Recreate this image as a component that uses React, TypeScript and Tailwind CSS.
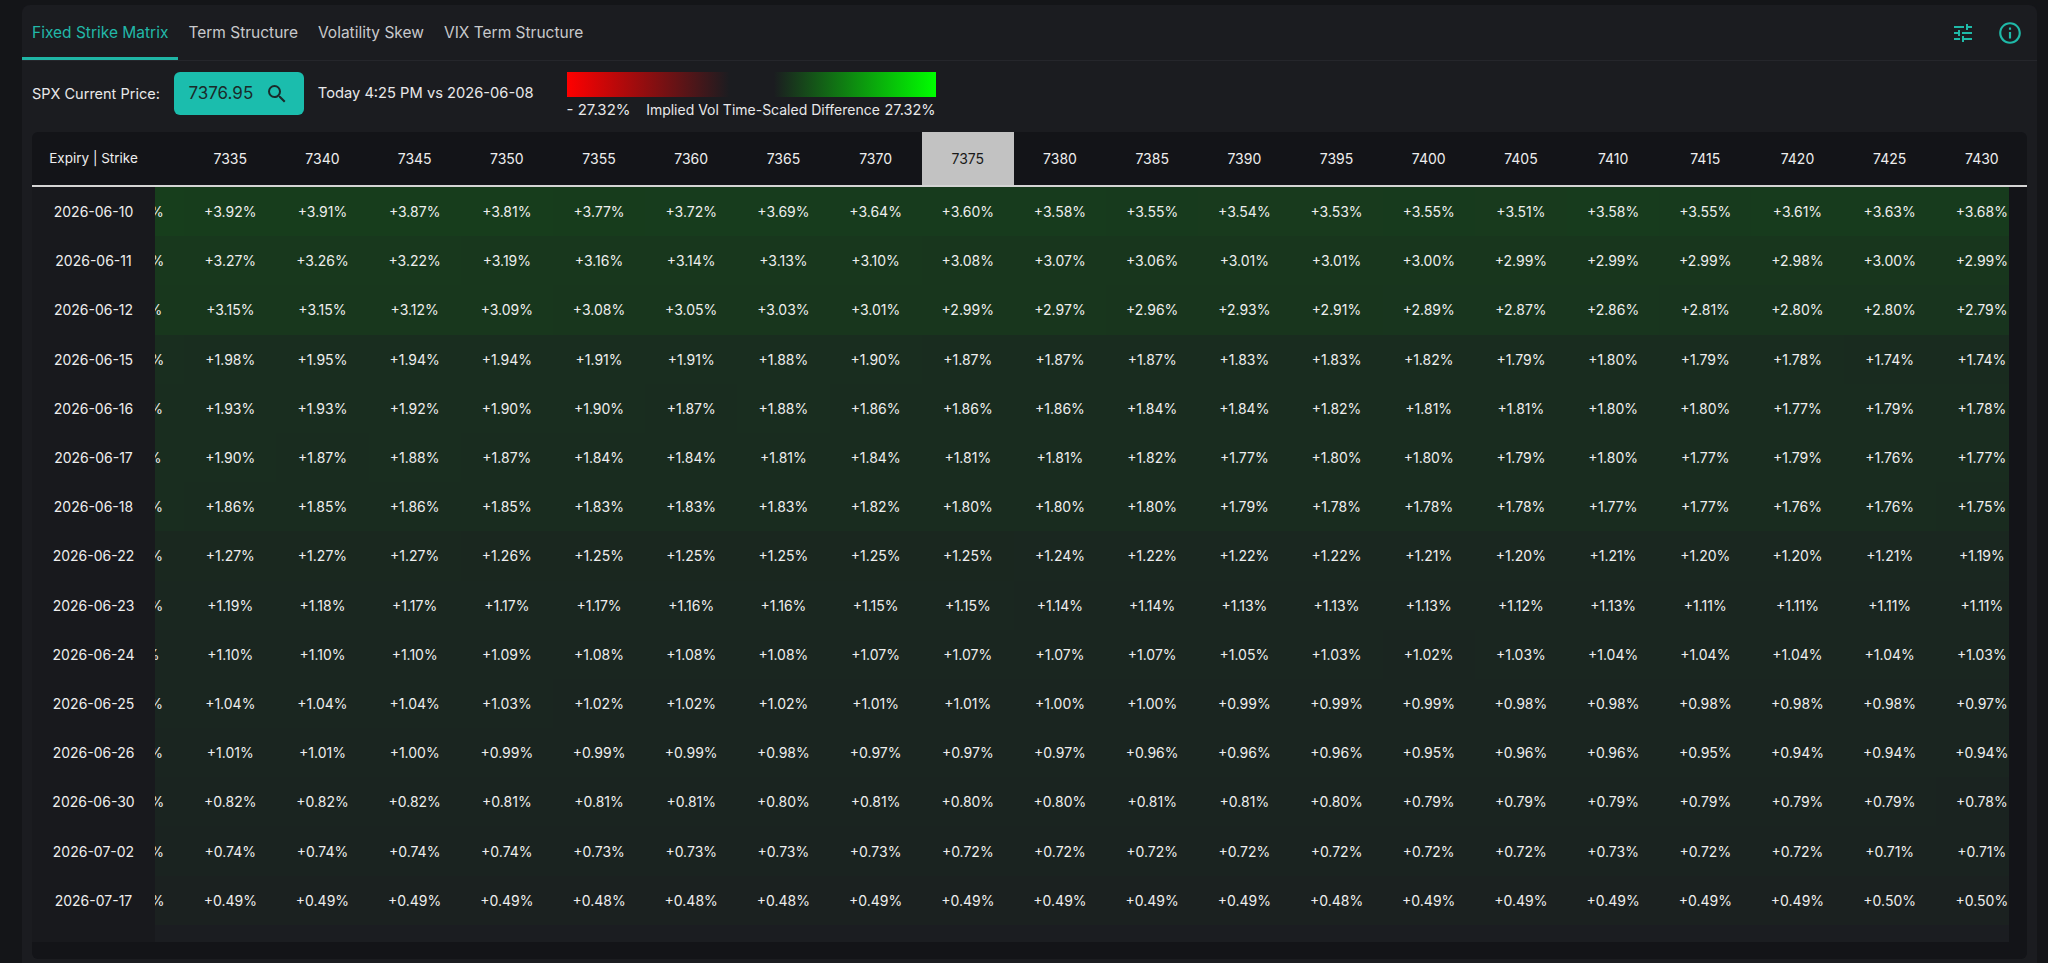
import { useLayoutEffect, useRef } from 'react'
import { MdTune, MdInfoOutline, MdSearch } from 'react-icons/md'

const strikes = [7330, 7335, 7340, 7345, 7350, 7355, 7360, 7365, 7370, 7375, 7380, 7385, 7390, 7395, 7400, 7405, 7410, 7415, 7420, 7425, 7430]

const rows: [string, number[]][] = [
  ['2026-06-10', [3.97, 3.92, 3.91, 3.87, 3.81, 3.77, 3.72, 3.69, 3.64, 3.6, 3.58, 3.55, 3.54, 3.53, 3.55, 3.51, 3.58, 3.55, 3.61, 3.63, 3.68]],
  ['2026-06-11', [3.3, 3.27, 3.26, 3.22, 3.19, 3.16, 3.14, 3.13, 3.1, 3.08, 3.07, 3.06, 3.01, 3.01, 3.0, 2.99, 2.99, 2.99, 2.98, 3.0, 2.99]],
  ['2026-06-12', [3.18, 3.15, 3.15, 3.12, 3.09, 3.08, 3.05, 3.03, 3.01, 2.99, 2.97, 2.96, 2.93, 2.91, 2.89, 2.87, 2.86, 2.81, 2.8, 2.8, 2.79]],
  ['2026-06-15', [2.0, 1.98, 1.95, 1.94, 1.94, 1.91, 1.91, 1.88, 1.9, 1.87, 1.87, 1.87, 1.83, 1.83, 1.82, 1.79, 1.8, 1.79, 1.78, 1.74, 1.74]],
  ['2026-06-16', [1.95, 1.93, 1.93, 1.92, 1.9, 1.9, 1.87, 1.88, 1.86, 1.86, 1.86, 1.84, 1.84, 1.82, 1.81, 1.81, 1.8, 1.8, 1.77, 1.79, 1.78]],
  ['2026-06-17', [1.91, 1.9, 1.87, 1.88, 1.87, 1.84, 1.84, 1.81, 1.84, 1.81, 1.81, 1.82, 1.77, 1.8, 1.8, 1.79, 1.8, 1.77, 1.79, 1.76, 1.77]],
  ['2026-06-18', [1.88, 1.86, 1.85, 1.86, 1.85, 1.83, 1.83, 1.83, 1.82, 1.8, 1.8, 1.8, 1.79, 1.78, 1.78, 1.78, 1.77, 1.77, 1.76, 1.76, 1.75]],
  ['2026-06-22', [1.28, 1.27, 1.27, 1.27, 1.26, 1.25, 1.25, 1.25, 1.25, 1.25, 1.24, 1.22, 1.22, 1.22, 1.21, 1.2, 1.21, 1.2, 1.2, 1.21, 1.19]],
  ['2026-06-23', [1.2, 1.19, 1.18, 1.17, 1.17, 1.17, 1.16, 1.16, 1.15, 1.15, 1.14, 1.14, 1.13, 1.13, 1.13, 1.12, 1.13, 1.11, 1.11, 1.11, 1.11]],
  ['2026-06-24', [1.11, 1.1, 1.1, 1.1, 1.09, 1.08, 1.08, 1.08, 1.07, 1.07, 1.07, 1.07, 1.05, 1.03, 1.02, 1.03, 1.04, 1.04, 1.04, 1.04, 1.03]],
  ['2026-06-25', [1.05, 1.04, 1.04, 1.04, 1.03, 1.02, 1.02, 1.02, 1.01, 1.01, 1.0, 1.0, 0.99, 0.99, 0.99, 0.98, 0.98, 0.98, 0.98, 0.98, 0.97]],
  ['2026-06-26', [1.02, 1.01, 1.01, 1.0, 0.99, 0.99, 0.99, 0.98, 0.97, 0.97, 0.97, 0.96, 0.96, 0.96, 0.95, 0.96, 0.96, 0.95, 0.94, 0.94, 0.94]],
  ['2026-06-30', [0.83, 0.82, 0.82, 0.82, 0.81, 0.81, 0.81, 0.8, 0.81, 0.8, 0.8, 0.81, 0.81, 0.8, 0.79, 0.79, 0.79, 0.79, 0.79, 0.79, 0.78]],
  ['2026-07-02', [0.75, 0.74, 0.74, 0.74, 0.74, 0.73, 0.73, 0.73, 0.73, 0.72, 0.72, 0.72, 0.72, 0.72, 0.72, 0.72, 0.73, 0.72, 0.72, 0.71, 0.71]],
  ['2026-07-17', [0.5, 0.49, 0.49, 0.49, 0.49, 0.48, 0.48, 0.48, 0.49, 0.49, 0.49, 0.49, 0.49, 0.48, 0.49, 0.49, 0.49, 0.49, 0.49, 0.5, 0.5]],
]

const MAX = 27.32
const BASE = [27, 29, 33]

// blend the cell background toward pure green / red by the size of the move
function cellColor(v: number) {
  const t = Math.min(Math.abs(v) / MAX, 1)
  const target = v >= 0 ? [0, 255, 0] : [255, 0, 0]
  const c = BASE.map((b, i) => Math.round(b + (target[i] - b) * t))
  return `rgb(${c[0]}, ${c[1]}, ${c[2]})`
}

const fmt = (v: number) => (v >= 0 ? '+' : '') + v.toFixed(2) + '%'

const tabs = ['Fixed Strike Matrix', 'Term Structure', 'Volatility Skew', 'VIX Term Structure']

export default function App() {
  const headRef = useRef<HTMLDivElement>(null)
  const bodyRef = useRef<HTMLDivElement>(null)

  useLayoutEffect(() => {
    if (headRef.current) headRef.current.scrollLeft = 63
    if (bodyRef.current) bodyRef.current.scrollLeft = 63
  }, [])

  return (
    <div className="min-h-screen bg-[#141518] pl-[22px] pr-[11px] pt-[5px] font-['Inter',sans-serif] text-[#e6e7e9]">
      <div className="rounded-lg bg-[#1b1c20] pb-6">
        {/* tabs */}
        <div className="flex h-[56px] items-stretch justify-between border-b border-[#25262b] pr-[14px]">
          <div className="flex">
            {tabs.map((t, i) => (
              <div
                key={t}
                className={
                  i === 0
                    ? 'flex items-center border-b-[3px] border-[#1fb5a5] px-[10px] pt-[3px] text-[15.5px] text-[#22b8a8]'
                    : 'flex items-center border-b-[3px] border-transparent px-[10px] pt-[3px] text-[15.5px] text-[#c8c9cc]'
                }
              >
                {t}
              </div>
            ))}
          </div>
          <div className="flex items-center gap-[22px] text-[#1fb9a8]">
            <MdTune size={24} />
            <MdInfoOutline size={26} />
          </div>
        </div>

        {/* price row */}
        <div className="flex items-start px-[10px] pt-[11px]">
          <div className="flex h-[43px] items-center">
            <span className="text-[14.5px] text-[#e8e8ea]">SPX Current Price:</span>
            <button className="ml-[14px] flex h-[43px] w-[130px] items-center justify-center gap-[12px] rounded-md bg-[#1bbdad] text-[17px] text-[#1a2a2a]">
              7376.95
              <MdSearch size={24} />
            </button>
            <span className="ml-[14px] text-[14.7px] text-[#e8e8ea]">Today 4:25 PM vs 2026-06-08</span>
          </div>
          <div className="ml-[33px] flex w-[369px] flex-col">
            <div className="h-[25px] w-full bg-[linear-gradient(to_right,#ff0000_0%,#1b1c20_44%,#1b1c20_56%,#00ff00_100%)]" />
            <div className="mt-[2px] flex items-center justify-between whitespace-nowrap text-[15px] leading-[22px] text-[#e8e8ea]">
              <span>- 27.32%</span>
              <span className="ml-[11px] text-[14px]">Implied Vol Time-Scaled Difference</span>
              <span className="text-[14.5px]">27.32%</span>
            </div>
          </div>
        </div>

        {/* matrix */}
        <div className="mx-[10px] mt-[11px] overflow-hidden rounded-md bg-[#131418] text-[14px] text-[#eeeeee]">
          <div className="flex h-[55px] border-b-2 border-[#d4d4d4]">
            <div className="flex w-[123px] shrink-0 items-center justify-center text-[13.5px]">Expiry | Strike</div>
            <div ref={headRef} className="flex flex-1 overflow-hidden">
              {strikes.map((s) => (
                <div
                  key={s}
                  className={
                    s === 7375
                      ? 'flex w-[92.2px] shrink-0 items-center justify-center bg-[#c2c2c2] text-[#1a1a1a]'
                      : 'flex w-[92.2px] shrink-0 items-center justify-center'
                  }
                >
                  {s}
                </div>
              ))}
            </div>
          </div>

          <div className="flex h-[755px]">
            <div className="w-[123px] shrink-0 bg-[#18191d]">
              {rows.map(([d]) => (
                <div key={d} className="flex h-[49.2px] items-center justify-center">
                  {d}
                </div>
              ))}
            </div>
            <div ref={bodyRef} className="flex-1 overflow-hidden bg-[#1b1d21]">
              {rows.map(([d, vals]) => (
                <div key={d} className="flex h-[49.2px]">
                  {vals.map((v, i) => (
                    <div
                      key={i}
                      className="flex w-[92.2px] shrink-0 items-center justify-center"
                      style={{ backgroundColor: cellColor(v) }}
                    >
                      {fmt(v)}
                    </div>
                  ))}
                </div>
              ))}
            </div>
            <div className="w-[18px] shrink-0" />
          </div>
          <div className="h-[17px]" />
        </div>
      </div>
    </div>
  )
}
